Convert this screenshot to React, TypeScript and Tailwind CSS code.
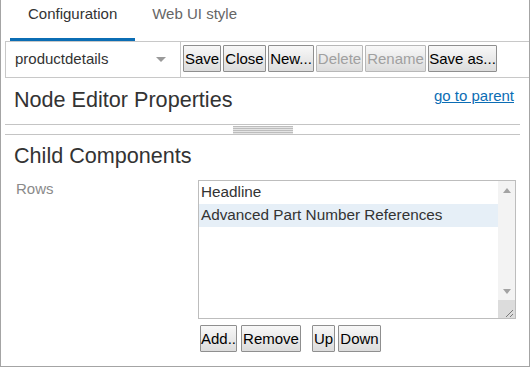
import clsx from "clsx";

function Btn({ label, w, disabled }: { label: string; w: string; disabled?: boolean }) {
  return (
    <button
      type="button"
      className={clsx(
        "h-[27px] shrink-0 rounded-[1px] border bg-linear-to-b from-[#f8f8f8] to-[#dcdcdc] px-0 text-center text-[15px] leading-[17px]",
        w,
        disabled ? "border-[#b8b8b8] text-[#a0a0a0]" : "border-[#8f8f8f] text-black",
      )}
    >
      {label}
    </button>
  );
}

function Caret({ up }: { up?: boolean }) {
  return (
    <svg width="8" height="5" viewBox="0 0 8 5" className="block">
      <polygon points={up ? "0,5 8,5 4,0" : "0,0 8,0 4,5"} fill="#a3a3a3" />
    </svg>
  );
}

export default function App() {
  return (
    <div className="h-[368px] w-[531px] overflow-hidden bg-white font-['Liberation_Sans',Arial,sans-serif]">
      <div className="flex h-[367px] w-[530px] flex-col border-x border-b border-[#a4a4a4]">
        {/* tabs */}
        <div className="flex h-[41px] shrink-0 items-start pl-[9px]">
          <div className="h-[41px] border-b-[3px] border-[#0b6db4] px-[18px] pt-[5px] text-[15px] leading-[17px] text-[#333]">
            Configuration
          </div>
          <div className="px-[17px] pt-[5px] text-[15px] leading-[17px] text-[#666]">Web UI style</div>
        </div>

        {/* toolbar */}
        <div className="ml-[4px] flex h-[37px] shrink-0 items-start border-y border-[#c8c8c8]">
          <div className="flex h-[35px] w-[176px] items-center justify-between border-x border-[#c8c8c8] pl-[9px] pr-[14px] text-[15px] text-[#333]">
            <span>productdetails</span>
            <svg width="10" height="5" viewBox="0 0 10 5">
              <polygon points="0,0 10,0 5,5" fill="#9a9a9a" />
            </svg>
          </div>
          <div className="ml-[2px] mt-[3px] flex gap-[2px]">
            <Btn label="Save" w="w-[38px]" />
            <Btn label="Close" w="w-[43px]" />
            <Btn label="New..." w="w-[46px]" />
            <Btn label="Delete" w="w-[47px]" disabled />
            <Btn label="Rename" w="w-[61px]" disabled />
            <Btn label="Save as..." w="w-[69px]" />
          </div>
        </div>

        {/* node editor header */}
        <div className="ml-[4px] w-[515px]">
          <div className="flex items-start justify-between border-b border-[#c4c4c4] pb-[12px] pl-[9px] pr-[6px] pt-[9px]">
            <h1 className="text-[21.6px] leading-[25px] text-[#333]">Node Editor Properties</h1>
            <a href="#" className="text-[15px] leading-[17px] text-[#0b6db4] underline">
              go to parent
            </a>
          </div>
          <div className="flex h-[9px] justify-center">
            <div className="mt-[1px] h-[8px] w-[60px] bg-[repeating-linear-gradient(to_bottom,#bcbcbc_0px,#bcbcbc_1px,#e4e4e4_1px,#e4e4e4_2px)]" />
          </div>
          <div className="border-t border-[#c4c4c4]" />
        </div>

        {/* child components */}
        <div className="ml-[4px] pl-[9px] pt-[8px]">
          <h2 className="text-[21.6px] leading-[25px] text-[#333]">Child Components</h2>

          <div className="mt-[12px] flex">
            <div className="w-[184px] pl-[2px] text-[15px] leading-[17px] text-[#8a8a8a]">Rows</div>
            <div className="flex h-[139px] w-[318px] border border-[#bdbdbd] text-[15.3px] text-[#333]">
              <div className="flex-1">
                <div className="h-[23px] pl-[2px] leading-[21px]">Headline</div>
                <div className="h-[23px] bg-[#e6eff7] pl-[2px] leading-[21px]">Advanced Part Number References</div>
              </div>
              <div className="flex w-[17px] flex-col items-center bg-[#f3f3f3]">
                <div className="mt-[7px]">
                  <Caret up />
                </div>
                <div className="flex-1" />
                <div className="mb-[6px]">
                  <Caret />
                </div>
                <div className="h-[18px] w-[17px] bg-[#dcdcdc]">
                  <svg width="17" height="18" viewBox="0 0 17 18">
                    <line x1="15" y1="10" x2="8" y2="17" stroke="#7a7a7a" strokeWidth="1" />
                    <line x1="15" y1="14" x2="12" y2="17" stroke="#7a7a7a" strokeWidth="1" />
                  </svg>
                </div>
              </div>
            </div>
          </div>

          <div className="ml-[186px] mt-[6px] flex">
            <Btn label="Add.." w="w-[37px]" />
            <div className="ml-[4px]">
              <Btn label="Remove" w="w-[60px]" />
            </div>
            <div className="ml-[11px]">
              <Btn label="Up" w="w-[23px]" />
            </div>
            <div className="ml-[3px]">
              <Btn label="Down" w="w-[43px]" />
            </div>
          </div>
        </div>
      </div>
    </div>
  );
}
